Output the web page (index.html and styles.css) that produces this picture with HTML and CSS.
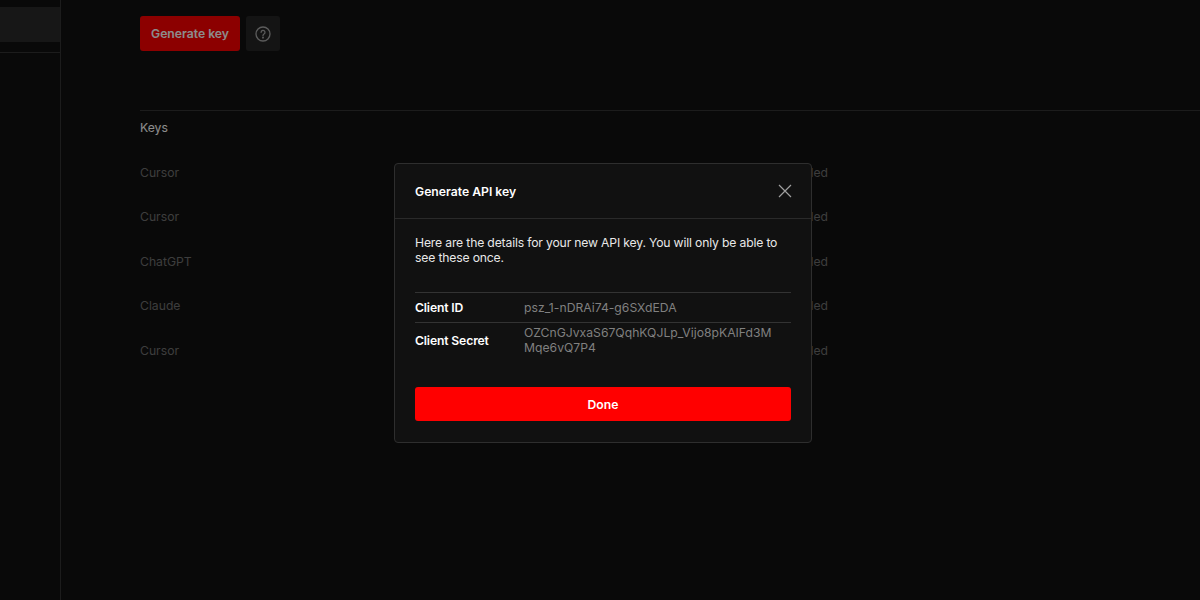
FILE: index.html
```html
<!DOCTYPE html>
<html lang="en">
  <head>
    <meta charset="UTF-8">
    <meta name="viewport" content="width=device-width, initial-scale=1.0">
    <title>API keys</title>
    <link rel="stylesheet" href="styles.css">
  </head>
<body>
  <div class="page">
    <aside class="sidebar">
      <div class="sidebar-item"></div>
      <div class="sidebar-line"></div>
    </aside>

    <main class="main">
      <div class="actions">
        <button class="generate" type="button">Generate key</button>
        <button class="help" type="button" aria-label="Help">
          <svg width="16" height="16" viewBox="0 0 16 16" fill="none" stroke="currentColor" stroke-width="1.3" stroke-linecap="round">
            <circle cx="8" cy="8" r="7"/>
            <path d="M6.1 6.3a1.95 1.95 0 1 1 2.9 1.7c-.6.35-1 .7-1 1.4"/>
            <circle cx="8" cy="11.6" r=".4"/>
          </svg>
        </button>
      </div>

      <section class="keys">
        <h2>Keys</h2>
        <div class="key-row"><span>Cursor</span><span>Enabled</span></div>
        <div class="key-row"><span>Cursor</span><span>Enabled</span></div>
        <div class="key-row"><span>ChatGPT</span><span>Enabled</span></div>
        <div class="key-row"><span>Claude</span><span>Disabled</span></div>
        <div class="key-row"><span>Cursor</span><span>Enabled</span></div>
      </section>
    </main>
  </div>

  <div class="overlay">
    <div class="modal">
      <div class="modal-header">
        <h3>Generate API key</h3>
        <button class="close" type="button" aria-label="Close">
          <svg width="16" height="16" viewBox="0 0 16 16" fill="none" stroke="currentColor" stroke-width="1.2">
            <path d="M2 2l12 12M14 2L2 14"/>
          </svg>
        </button>
      </div>
      <div class="modal-body">
        <p>Here are the details for your new API key. You will only be able to see these once.</p>
        <div class="details">
          <div class="detail">
            <span class="detail-label">Client ID</span>
            <span class="detail-value">psz_1-nDRAi74-g6SXdEDA</span>
          </div>
          <div class="detail">
            <span class="detail-label">Client Secret</span>
            <span class="detail-value">OZCnGJvxaS67QqhKQJLp_Vijo8pKAIFd3MMqe6vQ7P4</span>
          </div>
        </div>
        <button class="done" type="button">Done</button>
      </div>
    </div>
  </div>
</body>
</html>
```

FILE: styles.css
```css
/* page behind the dialog */
body {
  font-family: Inter, "Liberation Sans", sans-serif;
  background-color: #121212;
  color: #fff;
  margin: 0;
  height: 600px;
  overflow: hidden;
}

.page {
  display: flex;
  height: 600px;
}

.sidebar {
  width: 60px;
  flex-shrink: 0;
  border-right: 1px solid #333333;
  padding-top: 7px;
}

.sidebar-item {
  height: 35px;
  background-color: #2b2b2b;
}

.sidebar-line {
  margin-top: 10px;
  border-top: 1px solid #333333;
}

.main {
  flex: 1;
  padding: 16px 0 0 79px;
}

.actions {
  display: flex;
  gap: 6px;
}

.generate {
  width: 100px;
  height: 35px;
  border: 0;
  border-radius: 3px;
  background-color: #ff0000;
  color: #fff;
  font: 600 12.2px Inter, "Liberation Sans", sans-serif;
}

.help {
  display: flex;
  align-items: center;
  justify-content: center;
  width: 34px;
  height: 35px;
  border: 0;
  border-radius: 3px;
  background-color: #262626;
  color: #a8a8a8;
}

.keys {
  margin-top: 59px;
  border-top: 1px solid #333333;
}

.keys h2 {
  margin: 0;
  padding: 8px 0 14.6px;
  font-size: 12.2px;
  line-height: 17px;
  font-weight: 400;
  color: #fff;
}

.key-row {
  display: grid;
  grid-template-columns: 630px 58px;
  height: 44.5px;
  font-size: 12.2px;
  line-height: 44.5px;
  color: #707070;
}

.key-row span:last-child {
  text-align: right;
}

/* dialog */
.overlay {
  position: fixed;
  inset: 0;
  display: flex;
  align-items: flex-start;
  justify-content: flex-start;
  padding: 163px 0 0 394px;
  background-color: rgba(0, 0, 0, 0.45);
}

.modal {
  box-sizing: border-box;
  width: 418px;
  height: 280px;
  border: 1px solid #2e2e2e;
  border-radius: 4px;
  background-color: #111111;
}

.modal-header {
  display: flex;
  align-items: center;
  justify-content: space-between;
  height: 54px;
  padding: 0 18px 0 20px;
  border-bottom: 1px solid #2a2a2a;
}

.modal-header h3 {
  margin: 0;
  font-size: 12.2px;
  font-weight: 600;
}

.close {
  display: flex;
  padding: 0;
  border: 0;
  background: none;
  color: #a0a0a0;
}

.modal-body {
  padding: 16px 20px 0;
}

.modal-body p {
  margin: 0;
  font-size: 12.2px;
  letter-spacing: -0.17px;
  line-height: 15px;
  color: #e8e8e8;
}

.details {
  margin-top: 27px;
  border-top: 1px solid #333333;
}

.detail {
  display: grid;
  grid-template-columns: 109px 250px;
  align-items: center;
  min-height: 29px;
  font-size: 12.2px;
  line-height: 15px;
}

.detail + .detail {
  border-top: 1px solid #333333;
  padding-top: 2px;
}

.detail-label {
  font-weight: 600;
  letter-spacing: -0.15px;
}

.detail-value {
  color: #808080;
  overflow-wrap: anywhere;
}

.done {
  display: block;
  width: 100%;
  height: 34px;
  margin-top: 32px;
  border: 0;
  border-radius: 3px;
  background-color: #ff0000;
  color: #fff;
  font: 600 12.2px Inter, "Liberation Sans", sans-serif;
}
```
